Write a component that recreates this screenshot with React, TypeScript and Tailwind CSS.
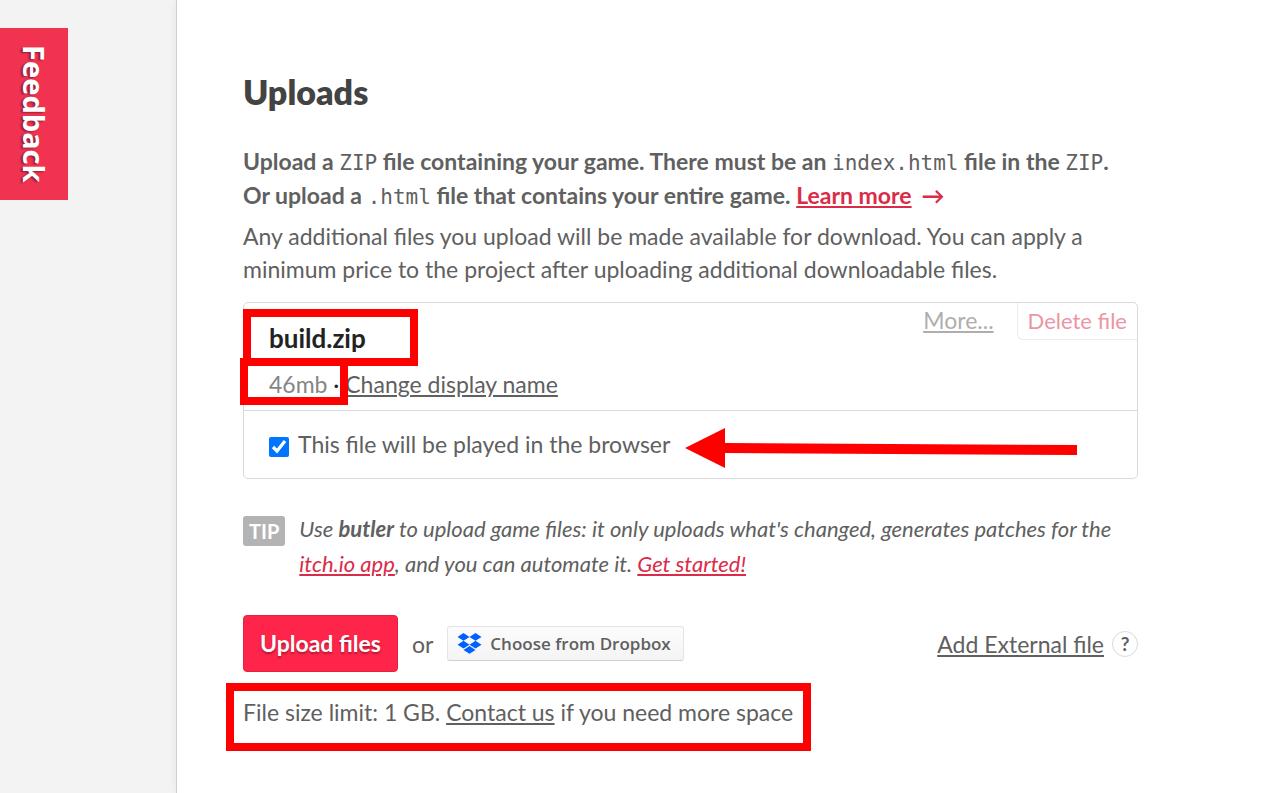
import type { ReactNode } from "react";

function Code({ children }: { children: ReactNode }) {
  return (
    <code className="font-['DejaVu_Sans_Mono',monospace] text-[21px] leading-none font-normal">
      {children}
    </code>
  );
}

function Highlight({ className }: { className: string }) {
  return (
    <div
      aria-hidden="true"
      className={`pointer-events-none absolute border-8 border-[#ff0000] ${className}`}
    />
  );
}

function DropboxLogo() {
  return (
    <svg viewBox="0 0 24 21" className="h-[21px] w-[25px] shrink-0" fill="#0061ff" aria-hidden="true">
      <path d="M6 0 12 3.9 6 7.8 0 3.9zM18 0 24 3.9 18 7.8 12 3.9zM6 7.8 12 11.7 6 15.6 0 11.7zM18 7.8 24 11.7 18 15.6 12 11.7zM12 13 18 16.9 12 20.8 6 16.9z" />
    </svg>
  );
}

function FileCard() {
  return (
    <section className="relative mt-4 rounded-[5px] border border-[#dadada]">
      <div className="flex h-[107px] items-start justify-between pl-[25px]">
        <div>
          <h3 className="mt-[17px] text-[26px] leading-[36px] font-bold text-[#222222]">
            build.zip
          </h3>
          <p className="mt-[11px] leading-[34px]">
            <span className="text-[#858585]">46mb</span>
            <span className="text-[#222222]"> · </span>
            <a href="#rename" className="underline">
              Change display name
            </a>
          </p>
        </div>
        <div className="flex opacity-50">
          <a href="#more" className="mr-[23px] leading-[34px] underline">
            More...
          </a>
          <button
            type="button"
            className="h-[37px] rounded-bl-[6px] border-b border-l border-[#dadada] px-[10px] pb-[2px] text-[22px] text-[#da2c49]"
          >
            Delete file
          </button>
        </div>
      </div>
      <div className="relative flex h-[68px] items-center border-t border-[#dadada] pl-[25px]">
        <input
          id="playable"
          type="checkbox"
          defaultChecked
          className="mt-1 mr-[9px] size-5 accent-[#0075ff]"
        />
        <label htmlFor="playable">This file will be played in the browser</label>
        <svg
          viewBox="0 0 392 40"
          className="pointer-events-none absolute top-[17px] left-[441px] h-10 w-[392px]"
          fill="#ff0000"
          aria-hidden="true"
        >
          <path d="M0 20 40 0V15L392 17V27L40 25V40z" />
        </svg>
      </div>
      <Highlight className="-left-px top-[6px] h-[57px] w-[175px]" />
      <Highlight className="-left-1 top-[55px] h-[47px] w-[108px]" />
    </section>
  );
}

export default function App() {
  return (
    <div className="flex min-h-screen bg-[#f3f3f3] font-['Lato',sans-serif] text-[23px] leading-[33px] text-[#606060]">
      <aside className="w-44 shrink-0 pt-7">
        <button
          type="button"
          className="flex h-[172px] w-[68px] items-center justify-center bg-[#f13251] font-['Noto_Sans',sans-serif] text-[29px] font-bold text-white [text-shadow:1px_2px_2px_rgba(0,0,0,0.4)] [writing-mode:vertical-rl]"
        >
          Feedback
        </button>
      </aside>
      <main className="min-w-0 flex-1 border-l border-[#cfcfcf] bg-white pt-[70px] pr-[142px] pb-10 pl-[66px] shadow-[0_0_8px_rgba(0,0,0,0.06)]">
        <h2 className="text-[34px] leading-[44px] font-extrabold text-[#434343]">Uploads</h2>
        <p className="mt-[30px] leading-[34px] font-bold">
          Upload a <Code>ZIP</Code> file containing your game. There must be an{" "}
          <Code>index.html</Code> file in the <Code>ZIP</Code>.
          <br />
          Or upload a <Code>.html</Code> file that contains your entire game.{" "}
          <a href="#learn" className="text-[#da2c49]">
            <span className="underline">Learn more</span>
            <span className="ml-[10px]">→</span>
          </a>
        </p>
        <p className="mt-2">
          Any additional files you upload will be made available for download. You can apply a
          minimum price to the project after uploading additional downloadable files.
        </p>
        <FileCard />
        <div className="mt-8 flex items-start gap-[14px]">
          <strong className="mt-[5px] rounded-[3px] bg-[#b3b3b3] px-[6px] text-[20px] leading-[30px] text-white">
            TIP
          </strong>
          <p className="text-[22px] leading-[35px] italic">
            Use <b>butler</b> to upload game files: it only uploads what's changed, generates
            patches for the{" "}
            <a href="#app" className="text-[#da2c49] underline">
              itch.io app
            </a>
            , and you can automate it.{" "}
            <a href="#start" className="text-[#da2c49] underline">
              Get started!
            </a>
          </p>
        </div>
        <div className="mt-[34px] flex items-center">
          <button
            type="button"
            className="h-[57px] rounded-[4px] border border-[#e6203f] bg-[#ff2449] px-4 font-bold text-white [text-shadow:0_2px_2px_rgba(0,0,0,0.3)]"
          >
            Upload files
          </button>
          <span className="mx-[14px] pt-[2px]">or</span>
          <button
            type="button"
            className="flex h-[35px] items-center gap-2 rounded-[3px] border border-[#e4e4e4] border-b-[#cfcfcf] bg-linear-to-b from-[#fcfcfc] to-[#f4f4f4] pr-3 pl-[9px] font-['Open_Sans',sans-serif] text-[17px] font-semibold"
          >
            <DropboxLogo />
            Choose from Dropbox
          </button>
          <a href="#external" className="ml-auto pt-[2px] underline">
            Add External file
          </a>
          <button
            type="button"
            aria-label="Help"
            className="ml-2 size-[26px] rounded-full border border-[#dadada] text-[19px] leading-none font-bold"
          >
            ?
          </button>
        </div>
        <div className="relative mt-6">
          <p>
            File size limit: 1 GB.{" "}
            <a href="#contact" className="underline">
              Contact us
            </a>{" "}
            if you need more space
          </p>
          <Highlight className="-top-[13px] -left-[17px] h-[68px] w-[585px]" />
        </div>
      </main>
    </div>
  );
}
